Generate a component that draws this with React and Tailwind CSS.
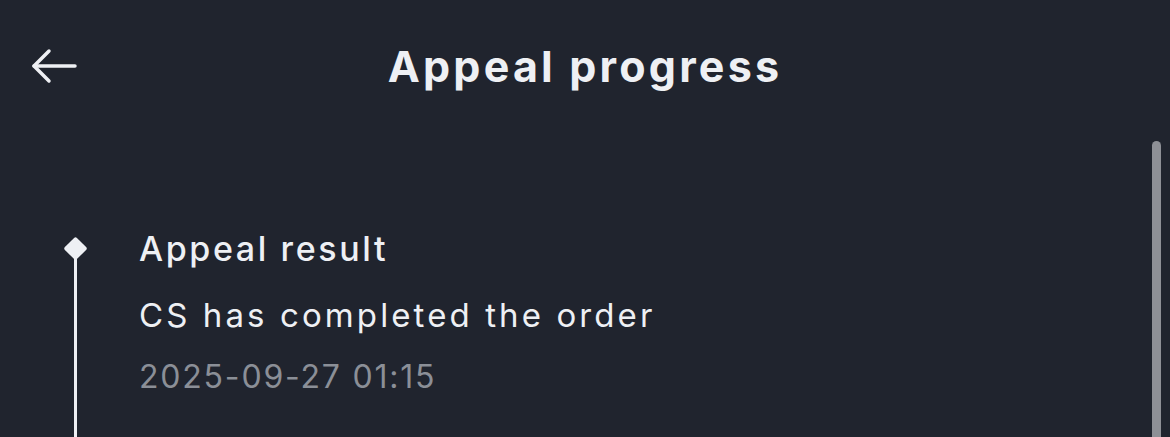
export default function App() {
  return (
    <div
      className="relative h-[437px] w-[1170px] overflow-hidden bg-[#20242e] text-[#eef0f4]"
      style={{ fontFamily: "Inter, 'Noto Sans', sans-serif" }}
    >
      <header className="grid h-[136px] grid-cols-[1fr_auto_1fr] items-center px-[30px] pb-[4px]">
        <svg width="48" height="36" viewBox="0 0 48 36" fill="none" stroke="#eef0f4" strokeWidth="3.5" strokeLinecap="round" strokeLinejoin="round">
          <path d="M45 18H4" />
          <path d="M19 3L4 18l15 15" />
        </svg>
        <h1 className="text-[43px] font-bold tracking-[3.2px]">Appeal progress</h1>
        <div />
      </header>

      <div className="flex pl-[63px] pt-[104px]">
        <div className="flex w-[24px] flex-col items-center">
          <div className="h-[17px] w-[17px] rotate-45 rounded-[2px] bg-[#eef0f4]" />
          <div className="-mt-[4px] h-[200px] w-[3px] bg-[#eef0f4]" />
        </div>
        <div className="-mt-[12px] ml-[52px] flex flex-col">
          <div className="text-[34px] font-medium leading-[42px] tracking-[2.6px]">Appeal result</div>
          <div className="mt-[24px] text-[33px] leading-[42px] tracking-[3.1px]">CS has completed the order</div>
          <div className="mt-[21px] text-[32px] leading-[40px] tracking-[1.8px] text-[#8b8f97]">2025-09-27 01:15</div>
        </div>
      </div>

      <div className="absolute right-[9px] top-[141px] h-[310px] w-[9px] rounded-t-full bg-[#8e9096]" />
    </div>
  );
}
